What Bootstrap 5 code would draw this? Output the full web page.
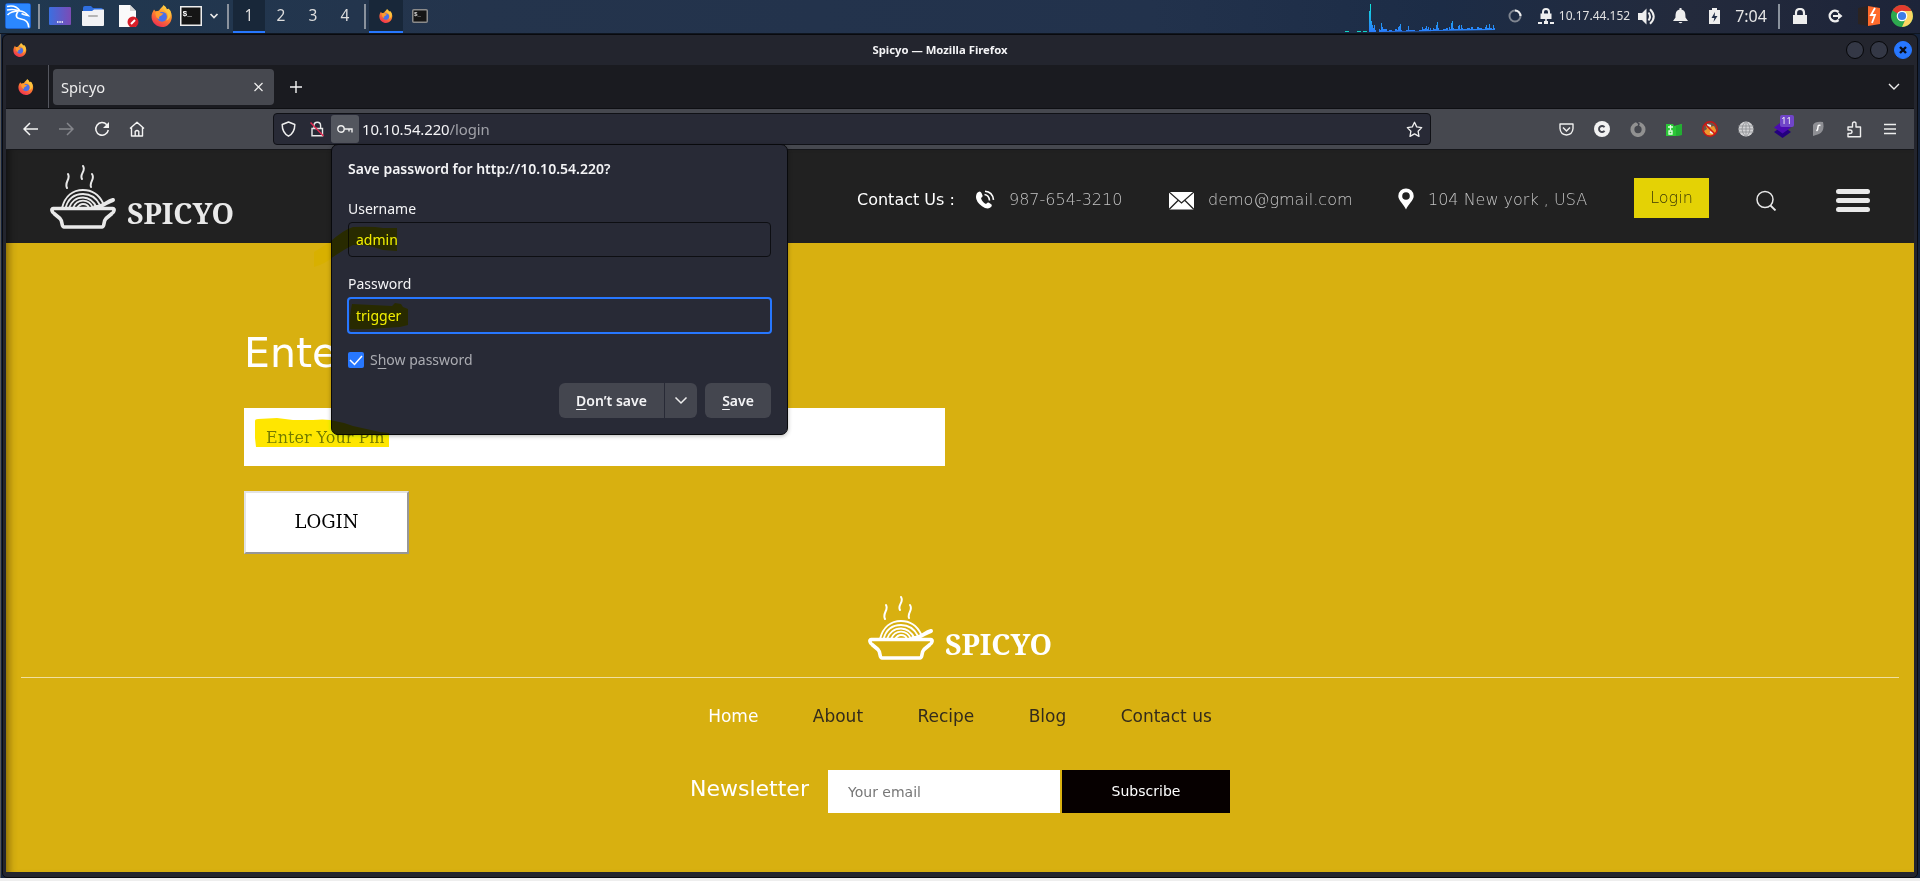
<!DOCTYPE html>
<html lang="en">
<head>
<meta charset="utf-8">
<title>Spicyo</title>
<link href="https://cdn.jsdelivr.net/npm/bootstrap@5.3.0/dist/css/bootstrap.min.css" rel="stylesheet">
<style>
html,body{height:881px;overflow:hidden}
body{background:#eee;font-family:"Noto Sans",sans-serif;color:#f4f4f6}
svg{display:block;flex:none}
.desk{height:878px;background:linear-gradient(90deg,#565656 0 1px,#15233b 1px)}
/* desktop panel */
.panel{height:34px;background:linear-gradient(90deg,#203850 0,#24344c 25%,#22324c 60%,#1c2c46 75%,#232a3c 88%,#1d2439 100%);border-bottom:1px solid #0f1620}
.slots{display:grid;align-items:center;justify-items:center;height:32px}
.slots-left{grid-template-columns:35px 8px 33px 34px 37px 29px 30px 16px 11px 32px 32px 32px 32px 8px 34px 34px}
.slots-right{grid-template-columns:150px 40px 22px 75px 29px 39px 29px 44px 12px 30px 40px 28px 37px}
.vbar{width:2px;height:25px;background:#8a929d}
.wsp{font-size:15.5px;line-height:30px;width:100%;height:33px;margin-bottom:-1px;text-align:center;color:#ddd;border-bottom:2px solid transparent}
.wsp.on{background:#182739;border-color:#2777ff}
.ipaddr{font-size:12px;line-height:30px;color:#e2e2e2;white-space:nowrap}
.clock{font-size:16px;line-height:30px;color:#e6e6e6}
/* window */
.win{margin-left:2px;width:1916px;height:844px;border:1px solid #090a0e;border-radius:6px 6px 5px 5px;background:#23252e;padding:0 3px 5px}
.titlebar{height:30px;display:grid;grid-template-columns:28px 1fr 24px 24px 24px;align-items:center;justify-items:center;font-size:11.3px;font-weight:700;margin-right:-1px}
.wbtn{width:18px;height:18px;border-radius:50%;background:#343846;border:1px solid #050608}
.wbtn.x{background:#2777ff;border-color:#2777ff}
.titlebar .t{margin-left:3px}
.tabs{height:44px;background:#1a1b20;border-bottom:1px solid #0e0f13}
.ffview{width:43px;height:43px;border-right:1px solid #55575f;padding-right:2px}
.tabitem{width:221px;height:36px;margin-left:4px;background:#46484f;border-radius:4px;font-size:14.67px;padding:0 9px 0 8px;color:#eee}
.alltabs{margin-left:auto;margin-right:14px}
.toolbar{height:41px;background:#46484f;border-bottom:1px solid #15161a}
.navbtns{display:grid;grid-template-columns:36px 36px 36px 34px;width:267px;padding-left:6px;align-items:center;justify-items:center}
.urlbar{width:1158px;height:32px;background:#282a36;border:1px solid #101116;border-radius:4px}
.idicons{display:grid;grid-template-columns:29px 27px 29px;align-items:center;justify-items:center}
.keybox{width:28px;height:28px;background:#53565e;border-radius:3px;display:grid;place-items:center}
.urltext{font-size:14.9px;letter-spacing:-.09px;padding-left:3px;white-space:nowrap}
.urltext span{color:#a0a1a8}
.star{margin-left:auto;margin-right:7px}
.exts{display:grid;grid-template-columns:repeat(10,36px);margin-left:117px;align-items:center;justify-items:center}
.cnt{top:-6px;left:6px;width:14px;height:12px;background:#7045c8;border-radius:2px;font-size:9px;line-height:12px;text-align:center}
/* site */
.site{height:722px;background:#d8b010;font-family:"DejaVu Sans",sans-serif;box-shadow:inset 9px 0 8px -7px rgba(70,50,0,.65)}
.sitehead{height:93px;background:#212121;display:grid;grid-template-columns:851px 117px 35px 159px 40px 189px 31px 206px 75px 47px 80px 1fr;font-size:16px;white-space:nowrap;box-shadow:inset 9px 0 8px -7px rgba(0,0,0,.6)}
.sitehead>*{height:24px;line-height:26px;margin-top:37px}
.sitehead>.brand{height:66px;margin:15px 0 0 44px;color:#e9e9e9}
.sitehead>.burger{height:26px}
.sitehead>svg:not(.brand){margin-left:1px;margin-top:38px}
.sitehead>svg.burger,.sitehead>svg.srch{margin-left:0;margin-top:37px}
.thin{font-weight:200;color:#c4c4c4}
.sitehead>.loginlink{height:40px;margin-top:28px;background:#e4d205;color:#3c3905;line-height:40px;text-align:center}
.main{padding-left:238px}
.main h1{font-size:41px;line-height:50px;width:92px;height:50px;overflow:hidden;white-space:nowrap;margin:85px 0 0;color:#fff;font-weight:400}
.pin{display:block;width:701px;height:58px;margin-top:30px;border:0;border-radius:0;background:#fff;padding:0 22px;font:16px "DejaVu Serif",serif;color:#777}
.pin::placeholder,.mail::placeholder{color:#777;opacity:1}
.go{display:block;width:165px;height:63px;margin-top:25px;border:2px solid;border-color:#e3e3e3 #979797 #979797 #e3e3e3;background:#fff;font:18px "DejaVu Serif",serif;color:#000;padding:0 0 2px}
.foot .brand{margin:42px auto 0;width:192px;color:#fff;position:relative;left:4px}
.rule{height:1px;background:#f0dfa0;margin:15px 15px 0}
.fnav{gap:54.4px;margin-top:25px;font-size:17px;line-height:26px;color:#332b1c}
.news{margin-top:41px;height:43px}
.news .lbl{font-size:22px;line-height:43px;color:#fff;margin-top:-3px;width:138px}
.mail{width:232px;height:43px;border:0;border-radius:0;background:#fff;padding:0 20px;font-size:14px}
.sub{width:168px;height:43px;margin-left:2px;background:#060000;color:#fff;font-size:14px;line-height:42px;text-align:center}
/* password doorhanger */
.door{left:331px;top:144px;width:457px;height:291px;background:#282a36;border:1px solid #08090c;border-radius:7px;padding:12px 16px;font-size:14px;box-shadow:0 1px 4px rgba(0,0,0,.3);z-index:5}
.door .ttl{font-weight:600;line-height:24px;height:24px;white-space:nowrap}
.door .lb{line-height:21px;height:22px;margin-top:17px}
.door .lb+.fld{margin-top:2px}
.door .fld+.lb{margin-top:16px}
.fld{height:35px;border:1px solid #0d0e12;border-radius:4px;line-height:33px;padding-left:7px}
.fld.foc{height:37px;margin:0 -1px;border:2px solid #2777ff;line-height:33px}
.showrow{margin-top:15px;height:22px;line-height:20px}
.showrow .cap{margin-left:6px;color:#abacb2}
.chk{width:16px;height:16px;background:#2777ff;border-radius:2px}
.acts{margin-top:12px}
.dbtn{height:35px;background:#44464f;font-weight:600;line-height:35px;display:grid;place-items:center;width:66px}
.dbtn.no{width:105px}
.dbtn.more{width:32px;margin:0 8px 0 1px}
u{text-underline-offset:3px;text-decoration-thickness:1px}
.marker{left:240px;top:210px;mix-blend-mode:darken;z-index:6;pointer-events:none}
</style>
</head>
<body>
<svg width="0" height="0" class="position-absolute">
<defs>
<linearGradient id="fg" x1=".8" y1="0" x2=".3" y2="1"><stop offset="0" stop-color="#ffe14d"/><stop offset=".45" stop-color="#ff8a2a"/><stop offset="1" stop-color="#ef2c52"/></linearGradient>
<linearGradient id="dg"><stop stop-color="#3b6fe0"/><stop offset="1" stop-color="#7c4bb5"/></linearGradient>
<linearGradient id="gg" x1="0" y1="0" x2="0" y2="1"><stop stop-color="#10e6d8"/><stop offset="1" stop-color="#2a7bff"/></linearGradient>
<symbol id="fox" viewBox="0 0 22 22"><path d="M1.2 8 3 4.5l1.6 2L8 5.8C9 3.500 11 2.800 12.500.3c2 1.200 3 3 3.200 4.200l1.800-.8c2.600 2.500 3.700 6 3.300 9C20 18.500 16 22 11 22S1 18 .6 12.500C.5 11 .6 9.500 1.200 8z" fill="url(#fg)"/><circle cx="11" cy="11.800" r="4.900" fill="#4a70e8"/><path d="M4.500 6.500 8 5.800 9.500 8l3 .6-2.400 2.200c-2 .7-2.500 1.700-1.700 3.400-3-.8-4.400-4-3.900-7.700z" fill="#ff9b2e"/><path d="M12.500.3c-1.200 3 1 4.500 3 7 2 2.800 1.500 6.200-.5 8.300 4-1.200 6-6 4.200-10.200l-1.700-1.700-1.800.8C15.500 3 14.500 1.500 12.500.3z" fill="#ffc43d"/></symbol>
<symbol id="bowl" viewBox="0 0 66 66"><g fill="none" stroke="currentColor" stroke-linecap="round" stroke-linejoin="round"><path d="M18 9c3 5-4 8-1 14M33 1c3.500 5-4 8-1 13M42 9c3.500 5-3 8-1 13" stroke-width="2"/><path d="M12 43C15 31 23 25 33 25s16 5 20 13" stroke-width="1.900"/><path d="M15.500 43C18 34 24 29 33 29s14 5 17 11M19 43c2-6 7-10.500 14-10.500S44 37 47 43M23 43c2-5 5-7.300 10-7.300s8 2.300 10 7.300M27 43c2-3 3-4 6-4s5 1 6 4" stroke-width="1.800"/><path d="M45 42c8 0 11-5 18-7" stroke-width="4"/><path d="M3 43.500h60c2 0 1 4-1 5l-6 5c-3 3-1 8-4 8.500H14c-3-.5-1-5.500-4-8.500l-6-5c-2-1-3-5-1-5z" stroke-width="3.600"/></g></symbol>
<symbol id="brand" viewBox="0 0 192 66"><use href="#bowl" width="66" height="66"/><text x="77" y="59" textLength="107" lengthAdjust="spacingAndGlyphs" font-family="'Noto Serif','DejaVu Serif Condensed','DejaVu Serif',serif" font-weight="700" font-size="29" fill="currentColor">SPICYO</text></symbol>
</defs></svg>

<div class="desk">
<nav class="panel d-flex justify-content-between">
 <div class="slots slots-left">
  <svg width="28" height="28" viewBox="0 0 28 28"><rect x="1" y="1" width="26" height="26" rx="3" fill="#1c62d0"/><rect x="2" y="2" width="24" height="24" fill="#2b87ff"/><path d="M3 4.500c6-1.500 10 0 13 4.500M3 8c5-1 9-.5 13 1M3.500 13c3-3.500 7-4 12-4 3 0 6 1.500 8.500 4.500l-3.500-.8M14 9.500c-3 4-2 7 3 7.500s7.500 3 7.800 8.500M20.500 12.700l-3-1.200" fill="none" stroke="#fff" stroke-width="1.600"/></svg>
  <div class="vbar"></div>
  <svg width="22" height="18"><rect width="22" height="18" rx="1" fill="url(#dg)"/><path d="M8 15h6" stroke="#fff" stroke-width="1.500" stroke-dasharray="1.500 .8"/></svg>
  <svg width="22" height="20"><path d="M1 2q0-2 2-2h6l2 2h8q2 0 2 2v4H1z" fill="#2f6fe0"/><path d="M0 5h10l2-1.500h10V19q0 1-1 1H1q-1 0-1-1z" fill="#f2f2f4"/><path d="M7 10h8" stroke="#b5b5b5" stroke-width="2" stroke-linecap="round"/></svg>
  <svg width="22" height="22"><path d="M1 0h11l6 6v16H1z" fill="#fafafa"/><path d="m12 0 6 6h-6z" fill="#d5d5d5"/><circle cx="15" cy="17" r="5.500" fill="#d81f2a"/><path d="m13 19 4-4" stroke="#fff" stroke-width="2"/></svg>
  <svg width="22" height="22"><use href="#fox"/></svg>
  <svg width="22" height="20"><rect x=".75" y=".75" width="20.500" height="18.500" fill="#151515" stroke="#eee" stroke-width="1.500"/><text x="2.500" y="9.500" font-size="8" font-weight="700" font-family="Liberation Mono,monospace" fill="#fff">$_</text></svg>
  <svg width="10" height="6"><path d="m1.500 1 3.500 3.500L8.500 1" fill="none" stroke="#e8e8e8" stroke-width="1.700"/></svg>
  <div class="vbar"></div>
  <div class="wsp on">1</div><div class="wsp">2</div><div class="wsp">3</div><div class="wsp">4</div>
  <div class="vbar"></div>
  <div class="wsp on d-flex align-items-center justify-content-center"><svg width="14" height="14"><use href="#fox"/></svg></div>
  <svg width="16" height="14"><rect x=".75" y=".75" width="14.500" height="12.500" rx="1" fill="#151515" stroke="#8b8b8b" stroke-width="1.500"/><text x="2" y="7" font-size="6" font-weight="700" font-family="Liberation Mono,monospace" fill="#ddd">$_</text></svg>
 </div>
 <div class="slots slots-right">
  <svg width="150" height="28" viewBox="0 0 150 28" class="align-self-end"><path d="M0 27.500h4M12 27.500h4M18 27.500h4" stroke="#10d8c8"/><path d="M24 28V7h1V0h1v17h1v4h1v3h1v-3h1v5h1v2h3v-3h1v1h1v-7h1v4h1v2h4v2h2v-1h3v1h3v-2h2v1h1v-3h1v-1h1v-2h1v6h1v1h4v-1h2v-4h1v4h6v1h4v-1h3v-3h1v2h2v-1h1v-2h1v3h1v-2h1v3h1v-2h1v2h2v-2h1v1h2v-4h1v-3h1v6h1v2h4v-1h3v-1h2v2h1v-3h1v2h1v-6h1v-2h1v7h1v1h4v-3h1v-1h1v4h1v-4h1v3h1v1h4v-1h3v1h1v-2h2v2h4v-2h2v1h3v1h3v-2h1v-2h1v3h2v-4h1v4h2v1h1v-4h1v3h1v2z" fill="url(#gg)"/></svg>
  <svg width="14" height="14"><circle cx="7" cy="7" r="5.500" fill="none" stroke="#7f8590" stroke-width="2"/><path d="M7 1.500A5.500 5.500 0 0 1 12.500 7" fill="none" stroke="#eee" stroke-width="2"/></svg>
  <svg width="16" height="16" fill="#efefef"><path d="M2.500 5.500h11V11h-11zM0 14h4v2H0zM6 13h4v3H6zM12 14h4v2h-4z"/><path d="M5 6V4q0-3 3-3t3 3v2" fill="none" stroke="#efefef" stroke-width="2"/><path d="M7.200 11h1.600v3H7.200z"/></svg>
  <span class="ipaddr">10.17.44.152</span>
  <svg width="18" height="17"><path d="M0 5h4l4.500-4.500v16L4 12H0z" fill="#eee"/><path d="M10.500 4.500q3 4 0 8M12 1.200q7.500 7.300 0 14.600" fill="none" stroke="#eee" stroke-width="2"/></svg>
  <svg width="15" height="16" fill="#eee"><path d="M6.500 0h2v1.500c3.500.8 4 3.500 4 8L15 13H0l2.500-3.500c0-4.500.5-7.200 4-8zM5.500 14h4q-2 2.500-4 0z"/></svg>
  <svg width="11" height="16"><path d="M0 2h3V0h5v2h3v14H0z" fill="#eee"/><path d="M6 4 2.500 10h2.800l-.8 4L8.500 8H5.700z" fill="#23304a"/></svg>
  <span class="clock">7:04</span>
  <div class="vbar"></div>
  <svg width="14" height="16"><path d="M0 7h14v9H0z" fill="#eee"/><path d="M3 8V5q0-4 4-4t4 4v3" fill="none" stroke="#eee" stroke-width="2.200"/></svg>
  <svg width="15" height="14"><path d="M10.500 3A5.300 5.300 0 1 0 10.500 11" fill="none" stroke="#eee" stroke-width="2.400"/><path d="M5 6h5V3.200L14.500 7 10 10.800V8H5z" fill="#eee"/></svg>
  <svg width="22" height="20"><path d="M0 2 10 0v20L0 18z" fill="#2a2322"/><path d="M10 0l12 2v16l-12 2z" fill="#ff6a2b"/><path d="M17 2l-4 7h4l-3 8" fill="none" stroke="#fff" stroke-width="1.800"/></svg>
  <svg width="22" height="22" viewBox="0 0 22 22"><circle cx="11" cy="11" r="11" fill="#2da94f"/><path d="M11 11 1.500 5.500A11 11 0 0 1 20.500 5.500z" fill="#e33b2e"/><path d="M11 6h9.700A11 11 0 0 1 11 22l4-9z" fill="#fdd663"/><circle cx="11" cy="11" r="5.300" fill="#fff"/><circle cx="11" cy="11" r="4.100" fill="#3f7de8"/></svg>
 </div>
</nav>

<div class="win">
 <div class="titlebar">
  <svg width="14" height="14"><use href="#fox"/></svg>
  <span class="t">Spicyo — Mozilla Firefox</span>
  <span class="wbtn"></span><span class="wbtn"></span>
  <span class="wbtn x d-flex align-items-center justify-content-center"><svg width="8" height="8"><path d="m1 1 6 6M7 1 1 7" stroke="#0a0d18" stroke-width="2.400"/></svg></span>
 </div>
 <div class="tabs d-flex align-items-center">
  <div class="ffview d-flex align-items-center justify-content-center"><svg width="16" height="16"><use href="#fox"/></svg></div>
  <div class="tabitem d-flex align-items-center justify-content-between"><span>Spicyo</span><svg width="13" height="10"><path d="m2.500 1 8 8m0-8-8 8" stroke="#eee" stroke-width="1.200"/></svg></div>
  <svg class="ms-3" width="12" height="12"><path d="M6 0v12M0 6h12" stroke="#f4f4f4" stroke-width="1.400"/></svg>
  <svg class="alltabs" width="12" height="8"><path d="m1 1 5 5 5-5" fill="none" stroke="#eee" stroke-width="1.400"/></svg>
 </div>
 <div class="toolbar d-flex align-items-center">
  <div class="navbtns">
   <svg width="15" height="14"><path d="M15 7H1.500m5.500-6-6 6 6 6" fill="none" stroke="#f4f4f4" stroke-width="1.500"/></svg>
   <svg width="15" height="14"><path d="M0 7h13.500M8 1l6 6-6 6" fill="none" stroke="#85868c" stroke-width="1.500"/></svg>
   <svg width="16" height="16"><path d="M12.800 3.700A6.300 6.300 0 1 0 14.300 9" fill="none" stroke="#f4f4f4" stroke-width="1.500"/><path d="M15 1v6H9z" fill="#f4f4f4"/></svg>
   <svg width="16" height="16"><path d="m1 7.500 7-6.300 7 6.300M2.500 6.500V15h11V6.500M6.200 15v-4.500q1.800-2 3.600 0V15" fill="none" stroke="#f4f4f4" stroke-width="1.400" stroke-linejoin="round"/></svg>
  </div>
  <div class="urlbar d-flex align-items-center">
   <div class="idicons">
    <svg width="15" height="16"><path d="m7.500 1 6.300 2.500c0 6-2 9.300-6.300 11.700C3.200 12.800 1.200 9.500 1.200 3.500z" fill="none" stroke="#eee" stroke-width="1.500" stroke-linejoin="round"/></svg>
    <svg width="14" height="16"><path d="M2 7.500h10.500v7.300H2zM4 7.500V4.700q0-3.500 3.300-3.500t3.300 3.500v2.800" fill="none" stroke="#e8e8e8" stroke-width="1.400"/><path d="m.5 1.500 13 13.500" stroke="#e22850" stroke-width="1.500"/></svg>
    <div class="keybox"><svg width="16" height="10"><circle cx="4" cy="5" r="3.200" fill="none" stroke="#eee" stroke-width="1.400"/><path d="M7.200 5H15v3.500M12 5v2.500" fill="none" stroke="#eee" stroke-width="1.400"/></svg></div>
   </div>
   <div class="urltext">10.10.54.220<span>/login</span></div>
   <svg class="star" width="17" height="17"><path d="m8.500 1.300 2.200 4.600 5 .7-3.600 3.600.9 5.200-4.500-2.500L4 15.400l.9-5.200L1.300 6.600l5-.7z" fill="none" stroke="#eee" stroke-width="1.300" stroke-linejoin="round"/></svg>
  </div>
  <div class="exts">
   <svg width="15" height="13"><path d="M1 1h13v4.500q-.5 6-6.500 6.500Q1.500 11.500 1 5.500z" fill="none" stroke="#eee" stroke-width="1.400" stroke-linejoin="round"/><path d="m4 4.500 3.500 3.500L11 4.500" fill="none" stroke="#eee" stroke-width="1.500"/></svg>
   <svg width="16" height="16"><circle cx="8" cy="8" r="8" fill="#f2f2f2"/><path d="M10.500 6.300a3 3 0 1 0 0 3.400" fill="none" stroke="#44464f" stroke-width="1.900"/></svg>
   <svg width="16" height="16"><circle cx="8" cy="8.500" r="5.600" fill="none" stroke="#919191" stroke-width="3.900"/><path d="m6 0 3 3-1 3" fill="none" stroke="#44464f" stroke-width="1.500"/></svg>
   <svg width="16" height="13"><path d="M0 1h7l1 2 8-2v11l-7 1H0z" fill="#2bc637"/><path d="M10 3l6-2v11l-6 1z" fill="#22b032"/><path d="M2 4h5M4.500 2v5M3 8h3v3H3z" fill="none" stroke="#e5ffe5" stroke-width="1.300"/></svg>
   <svg width="16" height="16"><circle cx="8" cy="8" r="7" fill="#6d5346"/><path d="M3 3l4 3 5-1 3 6-5 4-6-1-2-4 3-2z" fill="#f0962c"/><path d="M5 4l4 1M8 11l3 1" stroke="#eee" stroke-width="2"/><circle cx="8" cy="8" r="7.200" fill="none" stroke="#c81717" stroke-width="1.400"/><path d="m3 3 10 10" stroke="#d01515" stroke-width="1.500"/></svg>
   <svg width="16" height="16"><circle cx="8" cy="8" r="7.500" fill="#d2d2d4"/><path d="M0 5h16M0 8h16M0 11h16M8 0v16M8 0q-8 8 0 16M8 0q8 8 0 16" fill="none" stroke="#85868b" stroke-width=".7"/></svg>
   <div class="position-relative"><svg width="17" height="17"><path d="m8.500 5 8.500 6-8.500 6L0 11z" fill="#23007e"/><path d="m8.500 0 8.500 6.500-8.500 6L0 6.500z" fill="#4b0bb0"/></svg><span class="cnt position-absolute">11</span></div>
   <svg width="12" height="16"><path d="M1 4q2-4 10-3 2 9-4 12l-6 2z" fill="#8e8f94"/><path d="M8.500 4.500q-2.500-1-2.500 1.500T4.500 10" fill="none" stroke="#fff" stroke-width="1.500"/></svg>
   <svg width="15" height="17"><path d="M1 6h4.500V3q0-2 1.800-2T9 3v3h4.500v9.800H1v-3.300h2q2 0 2-1.700T3 9H1z" fill="none" stroke="#eee" stroke-width="1.400" stroke-linejoin="round"/></svg>
   <svg width="12" height="12"><path d="M0 1.500h12M0 6h12M0 10.500h12" stroke="#eee" stroke-width="1.300"/></svg>
  </div>
 </div>

 <div class="site">
  <header class="sitehead">
   <svg class="brand" width="192" height="66"><use href="#brand"/></svg>
   <span class="text-white">Contact Us :</span>
   <svg width="20" height="24"><path d="M2 5q3-3 4.500 0l1 2.500q.5 1-1.500 2.500 1 4 5 6 2-2 3-1.300l2.500 1.800q1 1.500-1.500 3.300-3 2-8-1.500Q-1.500 12 2 5z" fill="#fff"/><path d="M9.500 6.500q4.500.5 5 6M10 3.300q7.500.5 8.500 8.500" fill="none" stroke="#fff" stroke-width="1.600"/></svg>
   <span class="thin">987-654-3210</span>
   <svg width="25" height="24"><rect y="4" width="25" height="17.500" fill="#fff"/><path d="m0 4 12.500 11L25 4M0 21.500l9-9M25 21.500l-9-9" fill="none" stroke="#212121" stroke-width="1.300"/></svg>
   <span class="thin">demo@gmail.com</span>
   <svg width="16" height="24"><path d="M8 .5A7.500 7.500 0 0 1 15.700 8C15.700 12.500 10 16.500 8 21.500 6 16.500.3 12.500.3 8A7.500 7.500 0 0 1 8 .5z" fill="#fff"/><circle cx="8" cy="8" r="3.800" fill="#212121"/></svg>
   <span class="thin">104 New york , USA</span>
   <a class="loginlink thin text-decoration-none">Login</a>
   <i></i>
   <svg class="srch" width="21" height="24"><circle cx="9" cy="12.500" r="8" fill="none" stroke="#e9e9e9" stroke-width="1.500"/><path d="m14.500 18.500 5 5" stroke="#e9e9e9" stroke-width="1.800"/></svg>
   <svg class="burger" width="34" height="26"><path d="M2.500 4.500h29M2.500 13.500h29M2.500 22.500h29" stroke="#e9e9e9" stroke-width="5" stroke-linecap="round"/></svg>
  </header>
  <main class="main">
   <h1>Enter</h1>
   <input class="pin" placeholder="Enter Your Pin">
   <button class="go">LOGIN</button>
  </main>
  <footer class="foot">
   <svg class="brand" height="66"><use href="#brand"/></svg>
   <div class="rule"></div>
   <nav class="fnav d-flex justify-content-center"><span class="text-white">Home</span><span>About</span><span>Recipe</span><span>Blog</span><span>Contact us</span></nav>
   <div class="news d-flex justify-content-center"><span class="lbl">Newsletter</span><input class="mail" placeholder="Your email"><div class="sub">Subscribe</div></div>
  </footer>
 </div>
</div>
</div>

<section class="door position-absolute">
 <div class="ttl">Save password for http://10.10.54.220?</div>
 <div class="lb">Username</div>
 <div class="fld">admin</div>
 <div class="lb">Password</div>
 <div class="fld foc">trigger</div>
 <div class="showrow d-flex align-items-center"><span class="chk d-grid"><svg width="16" height="16"><path d="m2 8 4.500 4.500L14 4" fill="none" stroke="#fff" stroke-width="1.500"/></svg></span><span class="cap">S<u>h</u>ow password</span></div>
 <div class="acts d-flex justify-content-end"><div class="dbtn no rounded-start"><span><u>D</u>on’t save</span></div><div class="dbtn more rounded-end"><svg width="14" height="9"><path d="m1.500 1.500 5.500 5.500 5.500-5.500" fill="none" stroke="#eee" stroke-width="1.500"/></svg></div><div class="dbtn rounded"><span><u>S</u>ave</span></div></div>
</section>
<!-- highlighter strokes -->
<svg class="marker position-absolute" width="180" height="250" fill="#ffe600"><path d="M74 42 90 32Q103 20 113 17q20-1 30 1h14v23l-14-1q-12-4-20-5h-10Q103 40 93 47q-8 7-19 10z"/><path d="M112 94l20 1 20 1 3-3 6 1 2 3 5 2v16l-8 2-15 1q-20 2-35 1-1-12 2-25z"/><path d="M15 211q0-2 3-2l19-1 16 2h20q10-1 17 0 12 2 23 6l27 6 9 1v14H16l-1-9z"/></svg>
</body>
</html>
